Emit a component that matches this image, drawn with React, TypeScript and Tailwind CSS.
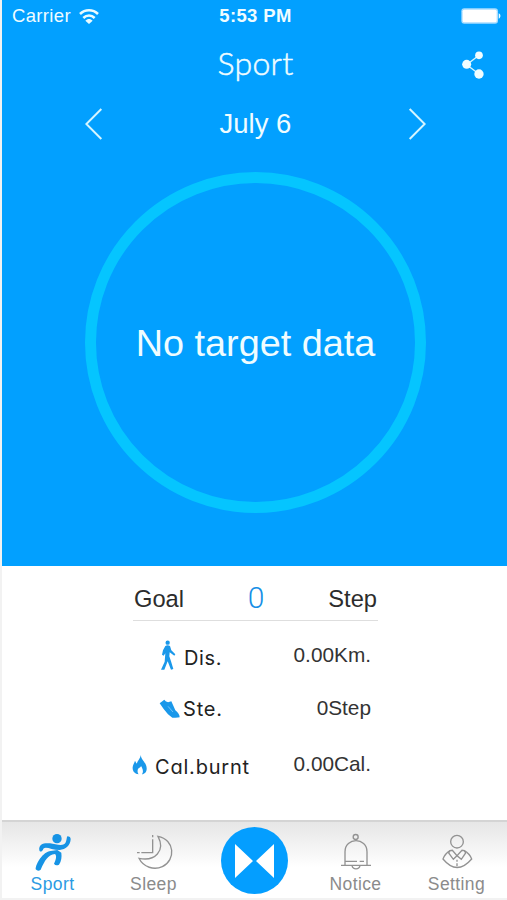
import React from 'react';

interface StatRowProps {
  icon: React.ReactNode;
  label: string;
  value: string;
  className: string;
  labelClassName: string;
}

interface TabProps {
  icon: React.ReactNode;
  label: string;
  active?: boolean;
}

const WifiIcon = () => (
  <svg width="20" height="15" viewBox="0 0 60 45" fill="none" stroke="#e9fbff" strokeWidth="7.5">
    <path d="M3 15C18 0 42 0 57 15" />
    <path d="M13 27C23 17 37 17 47 27" />
    <path d="M19 35C26 28 34 28 41 35L30 45Z" fill="#e9fbff" stroke="none" />
  </svg>
);

const BatteryIcon = () => (
  <svg width="40" height="16" viewBox="0 0 120 48">
    <rect x="1" y="1" width="110" height="46" rx="9" fill="#a9dcff" />
    <rect x="5" y="5" width="102" height="38" rx="5" fill="#fff" />
    <path d="M113 16C120 18 120 30 113 32Z" fill="#e9fbff" />
  </svg>
);

const ShareIcon = () => (
  <svg width="22" height="28" viewBox="0 0 66 84" fill="#f1fdff">
    <path d="M51 13L14 41L51 69" fill="none" stroke="#d9f6ff" strokeWidth="4" />
    <circle cx="51" cy="13" r="11.5" />
    <circle cx="14" cy="40" r="13.5" />
    <circle cx="51" cy="69" r="14" />
  </svg>
);

const Chevron = ({ points }: { points: string }) => (
  <svg width="18" height="32" viewBox="0 0 54 96" fill="none" stroke="#d5f5ff" strokeWidth="6">
    <polyline points={points} />
  </svg>
);

const WalkIcon = () => (
  <svg width="16" height="30" viewBox="0 0 48 90" fill="#1a98ea">
    <circle cx="23" cy="8" r="6.5" />
    <path d="M16 18Q23 14 30 18L34 31L46 43L43 47L29 37L28 49L33 64L40 87L33 89L23 64L13 89H3L14 65L16 40L11 47L6 44L9 31Z" />
  </svg>
);

const ShoeIcon = () => (
  <svg width="21" height="19" viewBox="0 0 63 57" fill="#1a98ea">
    <path d="M2 13L16 2L20 7Q26 12 37 7L49 34Q62 44 62 55Q55 57 40 56L27 46L14 30Z" />
    <path d="M27 22L42 39" stroke="#70c4fa" strokeWidth="3" />
  </svg>
);

const FlameIcon = () => (
  <svg width="15" height="21" viewBox="0 0 45 63" fill="#1a98ea">
    <path d="M27 2C25 16 43 24 44 42C45 54 38 60 30 61C36 52 31 42 27 36C25 43 18 40 17 49C16 54 18 58 20 61C8 60 1 51 2 40C3 32 7 27 9 20L14 29C17 19 25 13 27 2Z" />
  </svg>
);

const RunnerIcon = () => (
  <svg width="42" height="42" viewBox="95 92 126 126" fill="#1693e5">
    <circle cx="170" cy="115" r="14" />
    <path d="M201 108Q211 108 211 117C210 136 196 148 178 149C154 149 137 137 129 145C127 153 119 157 117 150C114 130 132 127 149 129C164 131 180 137 191 132C200 127 198 112 201 108Z" />
    <path d="M151 152L171 149L183 157Q186 179 176 193Q166 198 161 190C167 178 170 166 164 161C142 164 134 180 121 208Q113 215 106 207C106 190 128 154 151 152Z" />
  </svg>
);

const SleepIcon = () => (
  <svg width="38" height="38" viewBox="406 102 114 114" fill="none" stroke="#929292" strokeWidth="4">
    <path d="M475 112C526 121 529 184 488 203C463 214 431 205 418 178C466 188 498 155 475 112Z" />
    <path d="M459 108V115M459 121V161H425M420 161H412" />
  </svg>
);

const BellIcon = () => (
  <svg width="32" height="38" viewBox="92 102 96 114" fill="none" stroke="#929292" strokeWidth="4">
    <circle cx="139" cy="114" r="7.5" />
    <path d="M107 199V158C107 114 173 114 173 158V199M95 199H185" />
    <path d="M107 187H143M151 187H164M128 200C131 213 149 213 152 200" />
  </svg>
);

const PersonIcon = () => (
  <svg width="32" height="38" viewBox="394 102 96 114" fill="none" stroke="#929292" strokeWidth="4">
    <circle cx="442" cy="128" r="19" />
    <path d="M421 155Q406 164 400 180Q442 231 486 180Q480 164 464 155" />
    <path d="M421 155L417 162L431 181L442 170L455 181L468 162L464 155L457 154L442 170L428 154Z" />
    <path d="M442 182V188M442 193V202" />
  </svg>
);

const StatRow: React.FC<StatRowProps> = ({ icon, label, value, className, labelClassName }) => (
  <div className={`flex items-center justify-between pr-[136px] ${className}`}>
    <div className="flex items-center">
      {icon}
      <span className={`font-[Inter,sans-serif] text-[20px] leading-6 text-[#222] [font-feature-settings:'cv11'] ${labelClassName}`}>{label}</span>
    </div>
    <span className="text-[20.8px] leading-6 text-[#333]">{value}</span>
  </div>
);

const Tab: React.FC<TabProps> = ({ icon, label, active }) => (
  <button className="flex flex-1 flex-col items-center pt-[9px]">
    <span className="flex h-[41px] items-center">{icon}</span>
    <span className={`text-[17.5px] leading-6 tracking-[0.4px] ${active ? 'text-[#2b9be3]' : 'text-[#8b8b8b]'}`}>{label}</span>
  </button>
);

const App: React.FC = () => {
  return (
    <div className="flex h-[900px] w-[507px] flex-col overflow-hidden border-b-2 border-l-2 border-[#f2f2f2] bg-white font-['Liberation_Sans',Arial,sans-serif]">
      {/* Activity panel */}
      <section className="h-[566px] shrink-0 bg-[#02a0ff] text-[#effcff]">
        <div className="grid h-8 grid-cols-3 items-center pl-[10px] pr-[6px]">
          <div className="flex items-center gap-2">
            <span className="text-[18.5px] leading-6 tracking-[0.35px]">Carrier</span>
            <WifiIcon />
          </div>
          <span className="pr-[2px] text-center text-[18.5px] font-bold leading-6 tracking-[0.35px]">5:53 PM</span>
          <div className="flex justify-end"><BatteryIcon /></div>
        </div>

        <header className="grid h-[66px] grid-cols-3 items-center pr-[23px]">
          <span />
          <h1 className="-mt-1 pl-[25px] text-center font-[Lato,sans-serif] text-[32px] font-light leading-8 tracking-[0.3px] [-webkit-text-stroke:0.5px_#effcff]">Sport</h1>
          <button className="flex justify-end"><ShareIcon /></button>
        </header>

        <div className="flex h-[52px] items-center justify-between pl-[83px] pr-[81px]">
          <button><Chevron points="49,3 4,48 49,93" /></button>
          <span className="text-[27.5px] leading-8">July 6</span>
          <button><Chevron points="5,3 50,48 5,93" /></button>
        </div>

        <div className="ml-[83px] mt-[22px] flex size-[341px] items-center justify-center rounded-full border-[11px] border-[#05c5ff]">
          <span className="whitespace-nowrap text-[37.8px] leading-10">No target data</span>
        </div>
      </section>

      {/* Daily summary */}
      <section className="h-[254px] shrink-0 bg-white">
        <div className="ml-[131px] mt-[14px] flex h-[41px] w-[245px] items-center justify-between border-b border-[#dedede] px-[1px] pb-px text-[23.7px] text-[#2c2c2c]">
          <span>Goal</span>
          <span className="pb-[3px] font-[Roboto,sans-serif] text-[30px] font-light leading-8 text-[#168fe6]">0</span>
          <span>Step</span>
        </div>
        <StatRow
          className="mt-[19px] h-[30px] pl-[158px]"
          icon={<WalkIcon />}
          label="Dis."
          value="0.00Km."
          labelClassName="pl-2 pt-[6px] tracking-[0.6px]"
        />
        <StatRow
          className="mt-[26px] h-[24px] pl-[157px]"
          icon={<ShoeIcon />}
          label="Ste."
          value="0Step"
          labelClassName="pl-[3px] pt-[2px] tracking-[0.8px]"
        />
        <StatRow
          className="mt-[30px] h-[28px] pl-[130px]"
          icon={<FlameIcon />}
          label="Cal.burnt"
          value="0.00Cal."
          labelClassName="pl-2 pt-[5px] tracking-[0.8px]"
        />
      </section>

      {/* Bottom navigation */}
      <nav className="flex h-[78px] shrink-0 border-t-2 border-[#d4d4d4] bg-linear-to-b from-[#e6e6e6] to-white to-60%">
        <Tab icon={<RunnerIcon />} label="Sport" active />
        <Tab icon={<SleepIcon />} label="Sleep" />
        <button className="flex flex-1 justify-center pt-[5px]">
          <svg width="67" height="67" viewBox="0 0 67 67">
            <circle cx="33.5" cy="33.5" r="33.5" fill="#049eff" />
            <path d="M14 17L32 34L14 51ZM53 17L35 34L53 51Z" fill="#fff" />
          </svg>
        </button>
        <Tab icon={<BellIcon />} label="Notice" />
        <Tab icon={<PersonIcon />} label="Setting" />
      </nav>
    </div>
  );
};

export default App;
